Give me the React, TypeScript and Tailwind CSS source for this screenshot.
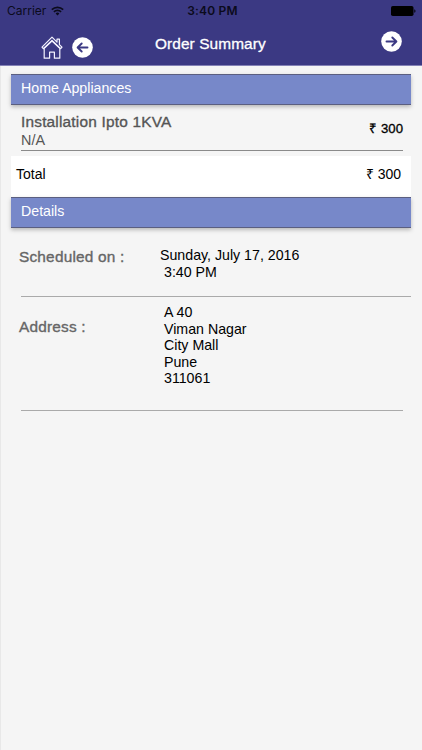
import type { ReactNode } from 'react';

const address = ['A 40', 'Viman Nagar', 'City Mall', 'Pune', '311061'];

function StatusBar() {
  return (
    <div className="grid h-[22px] grid-cols-3 items-center pr-[6px] pl-[7px] font-[Inter,sans-serif] text-[12px] text-[#0b0b1c]">
      <div className="flex items-center gap-[5px]">
        <span className="tracking-[0px]">Carrier</span>
        <svg width="13" height="10" viewBox="0 0 13 10" fill="none" stroke="#0b0b1c" strokeWidth="1.6">
          <path d="M0.8 3.7a8.2 8.2 0 0 1 11.4 0" />
          <path d="M2.9 5.9a5.1 5.1 0 0 1 7.2 0" />
          <path d="M6.5 9.4 4.6 7.4a2.8 2.8 0 0 1 3.8 0z" fill="#0b0b1c" stroke="none" />
        </svg>
      </div>
      <span className="pl-[2px] text-center font-semibold tracking-[0.2px]">3:40 PM</span>
      <svg className="justify-self-end" width="25" height="10" viewBox="0 0 25 10" fill="#000">
        <rect x="0" y="0" width="22.5" height="10" rx="1.8" />
        <path d="M23.3 3.2c1.6.5 1.6 3.1 0 3.6z" />
      </svg>
    </div>
  );
}

function HomeIcon() {
  return (
    <svg width="22" height="24" viewBox="0 0 22 24" fill="none" stroke="#f4f3ff" strokeWidth="1.2" strokeLinejoin="round">
      <path d="M11 1.2 16 6.2V3.2h2.4v5.4l2.6 2.6-1.3 1.5L11 4.4l-8.7 8.3L1 11.2z" />
      <path d="M3.2 12.2v10h5.4v-6h4.8v6h5.4v-10" />
      <path d="M3.2 12.4 11 5l7.8 7.4" />
    </svg>
  );
}

function ArrowButton({ direction }: { direction: 'left' | 'right' }) {
  return (
    <button aria-label={direction === 'left' ? 'Back' : 'Next'}>
      <svg
        className={direction === 'right' ? 'rotate-180' : ''}
        width="21"
        height="21"
        viewBox="0 0 21 21"
        fill="none"
      >
        <circle cx="10.5" cy="10.5" r="10.3" fill="#fff" />
        <path
          d="M15.5 10.5H5.8M9.7 6.5l-4.1 4 4.1 4"
          stroke="#3b3983"
          strokeWidth="1.9"
          strokeLinecap="round"
          strokeLinejoin="round"
        />
      </svg>
    </button>
  );
}

function SectionTitle({ children }: { children: ReactNode }) {
  return (
    <h2 className="h-[31px] border-y border-[#5b5f80] bg-[#7788c9] pl-[10px] text-[14.2px] leading-[27px] text-white shadow-[0_2px_4px_rgba(0,0,0,0.25)]">
      {children}
    </h2>
  );
}

export default function App() {
  return (
    <div className="h-[750px] w-[422px] border-l border-[#e8e8e8] bg-[#f5f5f5] font-['Liberation_Sans',Arial,sans-serif] text-black">
      <header className="-ml-px h-[66px] border-b border-[#8482b6] bg-[#3b3983]">
        <StatusBar />
        <div className="grid h-[43px] grid-cols-[114px_1fr_31px] items-start pr-[10px] pl-[41px]">
          <div className="flex gap-[9px]">
            <div className="pt-[14px]">
              <HomeIcon />
            </div>
            <div className="pt-[15px]">
              <ArrowButton direction="left" />
            </div>
          </div>
          <h1 className="pt-[12px] text-[15.4px] leading-[20px] tracking-[0.1px] text-white [-webkit-text-stroke:0.3px]">
            Order Summary
          </h1>
          <div className="pt-[9px]">
            <ArrowButton direction="right" />
          </div>
        </div>
      </header>

      <main className="pt-[8px] pr-[11px] pl-[10px]">
        <SectionTitle>Home Appliances</SectionTitle>

        <div className="mr-[8px] ml-[10px] flex h-[46px] justify-between border-b border-[#8a8a8a]">
          <div className="pt-[7px] text-[#555]">
            <p className="text-[15.4px] leading-[19px] tracking-[0.2px] [-webkit-text-stroke:0.35px]">
              Installation Ipto 1KVA
            </p>
            <p className="text-[14.4px] leading-[18px]">N/A</p>
          </div>
          <p className="pt-[15px] text-[13.2px] leading-[18px] [-webkit-text-stroke:0.3px]">₹ 300</p>
        </div>

        <div className="mt-[5px] flex h-[41px] justify-between bg-white pt-[9px] pr-[10px] pl-[5px] text-[14px] leading-[18px]">
          <span>Total</span>
          <span>₹ 300</span>
        </div>

        <SectionTitle>Details</SectionTitle>

        <div className="ml-[10px] flex h-[69px] border-b border-[#aaa]">
          <p className="-ml-[2px] w-[141px] pt-[19px] text-[15.4px] leading-[19px] tracking-[0.2px] text-[#666] [-webkit-text-stroke:0.35px]">
            Scheduled on :
          </p>
          <div className="pt-[19px] text-[14.2px] leading-[16.6px]">
            <p>Sunday, July 17, 2016</p>
            <p className="pl-[4px]">3:40 PM</p>
          </div>
        </div>

        <div className="mr-[8px] ml-[10px] flex h-[114px] border-b border-[#aaa]">
          <p className="-ml-[2px] w-[145px] pt-[20px] text-[15.4px] leading-[19px] tracking-[0.2px] text-[#666] [-webkit-text-stroke:0.35px]">
            Address :
          </p>
          <div className="pt-[7px] text-[14.2px] leading-[16.6px]">
            {address.map((line) => (
              <p key={line}>{line}</p>
            ))}
          </div>
        </div>
      </main>
    </div>
  );
}
